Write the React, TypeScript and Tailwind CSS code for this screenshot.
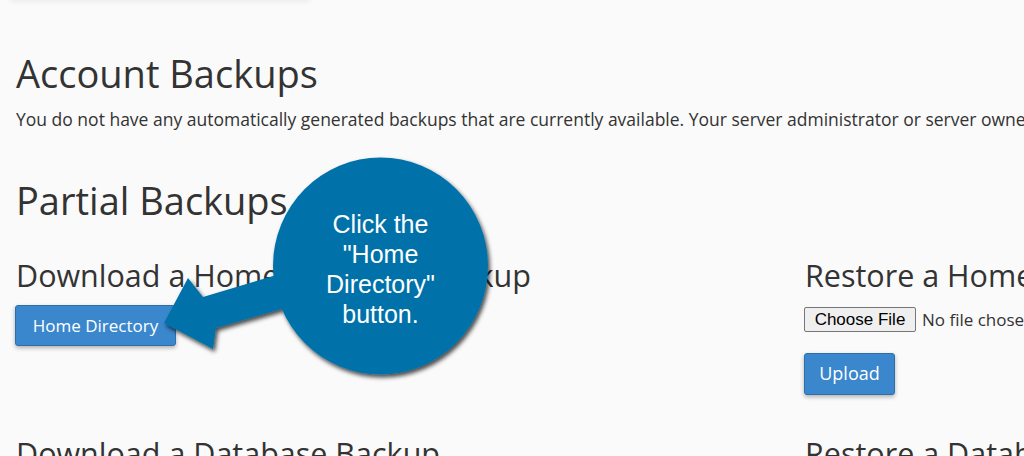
export default function App() {
  return (
    <div className="relative min-h-[456px] w-full overflow-hidden bg-[#fafafa] font-['Open_Sans',sans-serif] text-[#333]">
      <div className="-mt-[12px] ml-[10px] h-[12px] w-[300px] rounded-b bg-[#fafafa] shadow-[0_1px_6px_rgba(0,0,0,0.08)]" />
      <div className="px-[16px]">
        <h1 className="mt-[52px] text-[38px] leading-[42px] whitespace-nowrap">Account Backups</h1>
        <p className="mt-[12px] text-[17.5px] leading-[26px] whitespace-nowrap">
          You do not have any automatically generated backups that are currently available. Your server administrator or server owner
          may have disabled them.
        </p>

        <h2 className="mt-[47px] text-[38px] leading-[42px] whitespace-nowrap">Partial Backups</h2>

        <div className="mt-[36px] grid grid-cols-[789px_1fr]">
          <div>
            <h3 className="text-[30.5px] leading-[36px] whitespace-nowrap">Download a Home Directory Backup</h3>
            <button className="mt-[12px] -ml-px h-[41px] w-[161px] rounded-[3px] border border-[#2f6ea8] bg-[#3a87cd] text-[17px] text-white shadow-[0_2px_4px_rgba(0,0,0,0.3)]">
              Home Directory
            </button>
          </div>
          <div>
            <h3 className="text-[30.5px] leading-[36px] whitespace-nowrap">Restore a Home Directory Backup</h3>
            <div className="mt-[14px] flex items-center gap-[6px] whitespace-nowrap">
              <span className="-ml-px flex h-[25px] w-[112px] items-center justify-center rounded-[2px] border border-[#767676] bg-[#efefef] font-['Liberation_Sans',Arial,sans-serif] text-[17px] text-black">
                Choose File
              </span>
              <span className="text-[17px]">No file chosen</span>
            </div>
            <button className="mt-[20px] -ml-px h-[42px] w-[91px] rounded-[3px] border border-[#2f6ea8] bg-[#3a87cd] text-[18px] text-white shadow-[0_2px_4px_rgba(0,0,0,0.3)]">
              Upload
            </button>
          </div>
        </div>

        <div className="mt-[40px] grid grid-cols-[789px_1fr]">
          <h3 className="text-[30.5px] leading-[36px] whitespace-nowrap">Download a Database Backup</h3>
          <h3 className="text-[30.5px] leading-[36px] whitespace-nowrap">Restore a Database Backup</h3>
        </div>
      </div>

      {/* callout */}
      <svg className="pointer-events-none absolute left-0 top-0" width="520" height="400" viewBox="0 0 520 400">
        <defs>
          <filter id="sh" x="-20%" y="-20%" width="140%" height="140%">
            <feGaussianBlur in="SourceGraphic" stdDeviation="0.7" result="soft" />
            <feDropShadow in="soft" dx="2" dy="3" stdDeviation="2" floodColor="#000" floodOpacity="0.7" />
          </filter>
        </defs>
        <g filter="url(#sh)" fill="#0372a9">
          <polygon points="164,323 188,278 203,297 290,271 295,305 216,328 213,349" />
          <ellipse cx="380.5" cy="266" rx="107.5" ry="108.5" />
        </g>
      </svg>
      <div className="pointer-events-none absolute left-[273px] top-[209px] w-[215px] text-center font-['Liberation_Sans',Arial,sans-serif] text-[25px] leading-[30px] text-white">
        Click the
        <br />
        "Home
        <br />
        Directory"
        <br />
        button.
      </div>
    </div>
  )
}
